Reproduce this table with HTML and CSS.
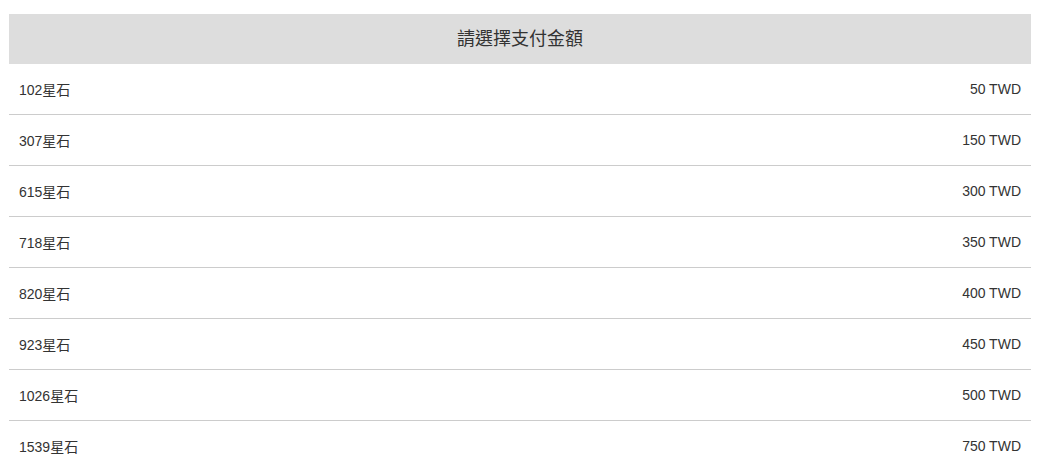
FILE: index.html
```html
<!DOCTYPE html>
<html lang="zh-Hant">
<head>
<meta charset="utf-8">
<link rel="stylesheet" href="styles.css">
</head>
<body>
<div class="panel">
  <div class="title">請選擇支付金額</div>
  <ul class="list">
    <li class="row"><span>102星石</span><span>50 TWD</span></li>
    <li class="row"><span>307星石</span><span>150 TWD</span></li>
    <li class="row"><span>615星石</span><span>300 TWD</span></li>
    <li class="row"><span>718星石</span><span>350 TWD</span></li>
    <li class="row"><span>820星石</span><span>400 TWD</span></li>
    <li class="row"><span>923星石</span><span>450 TWD</span></li>
    <li class="row"><span>1026星石</span><span>500 TWD</span></li>
    <li class="row"><span>1539星石</span><span>750 TWD</span></li>
  </ul>
</div>
</body>
</html>
```
FILE: styles.css
```css
html, body {
  margin: 0;
  padding: 0;
  background: #fff;
}
body {
  padding: 14px 10px 0 9px;
  font-family: "Liberation Sans", Arial, "Noto Sans CJK TC", sans-serif;
  color: #333;
}
.title {
  height: 50px;
  line-height: 50px;
  background: #ddd;
  text-align: center;
  font-size: 18px;
  color: #333;
}
.list {
  list-style: none;
  margin: 0;
  padding: 0;
}
.row {
  display: flex;
  justify-content: space-between;
  align-items: center;
  height: 50px;
  padding: 0 10px;
  font-size: 14px;
  border-bottom: 1px solid #ccc;
}
```
